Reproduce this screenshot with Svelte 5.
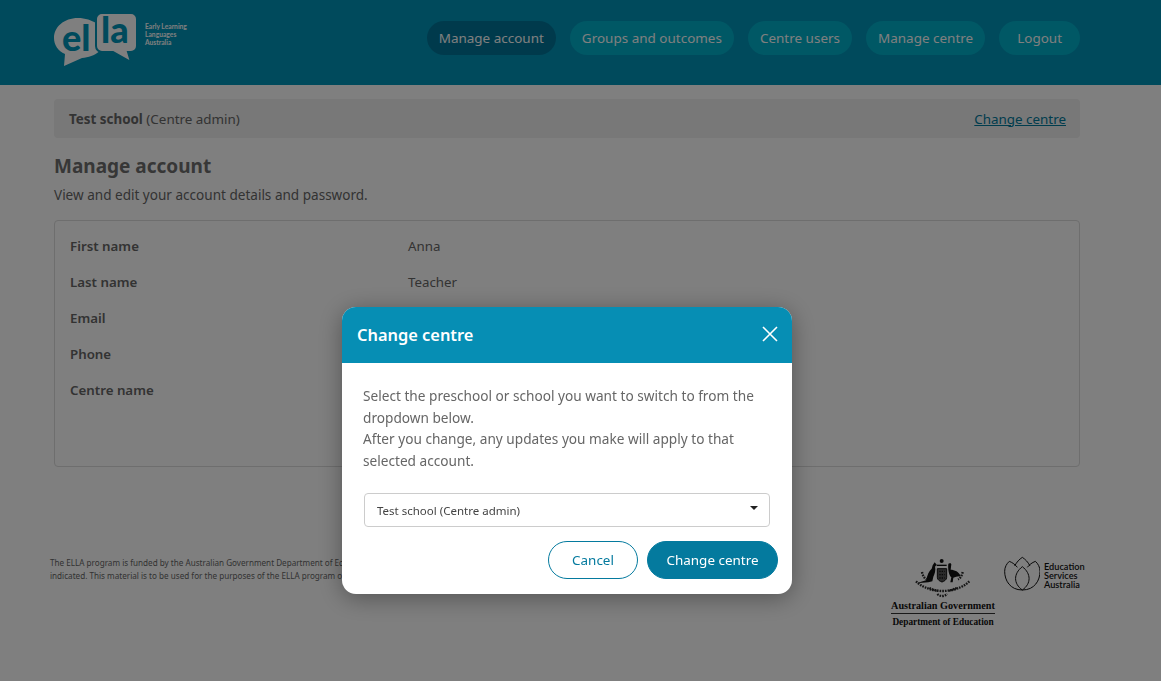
<script>
  const nav = [
    { label: 'Manage account', active: true },
    { label: 'Groups and outcomes' },
    { label: 'Centre users' },
    { label: 'Manage centre' },
    { label: 'Logout' }
  ];
  const rows = [
    ['First name', 'Anna'],
    ['Last name', 'Teacher'],
    ['Email', ''],
    ['Phone', ''],
    ['Centre name', '']
  ];
</script>

<div class="page">
  <header class="top">
    <div class="logo">
      <svg width="84" height="54" viewBox="0 0 84 54">
        <path class="bub" d="M24 5C10 5 0 14 0 25c0 7 4 13 11 16L10 53l18-8c13-1 24-9 24-20S38 5 24 5z" />
        <path class="bubr" d="M48 0h29a6 6 0 0 1 6 6v27a6 6 0 0 1-6 6h-3l3 10-18-10H48a6 6 0 0 1-6-6V6a6 6 0 0 1 6-6z" />
        <text class="lt" x="8" y="38">el</text>
        <text class="lt" x="47" y="30">la</text>
      </svg>
      <div class="tag">Early Learning<br />Languages<br />Australia</div>
    </div>
    <nav class="nav">
      {#each nav as item}
        <a class="pill" class:active={item.active} href="#top">{item.label}</a>
      {/each}
    </nav>
  </header>

  <main class="main">
    <div class="bar">
      <span><b>Test school</b> (Centre admin)</span>
      <a class="link" href="#top">Change centre</a>
    </div>
    <h1>Manage account</h1>
    <p class="sub">View and edit your account details and password.</p>
    <section class="card">
      {#each rows as [k, v]}
        <div class="row"><span class="k">{k}</span><span class="v">{v}</span></div>
      {/each}
    </section>
  </main>

  <footer class="foot">
    <p class="legal">The ELLA program is funded by the Australian Government Department of Education<br />indicated. This material is to be used for the purposes of the ELLA program only.</p>
    <div class="gov">
      <svg class="arms" width="66" height="48" viewBox="0 0 198 144">
        <circle cx="95" cy="27" r="6" fill="#111" />
        <path d="M80 40h30" stroke="#111" stroke-width="4" />
        <path d="M82 50h28v26c0 8-8 12-14 14-6-2-14-6-14-14z" fill="#555" stroke="#111" stroke-width="3" />
        <path d="M88 58h16M88 68h16M88 78h16" stroke="#111" stroke-width="4" stroke-dasharray="4 3" />
        <path d="M74 31l6 7-5 6c3 10-1 22-5 30l-3 14-12 3-36 3 29-9c4-16 9-29 17-35l3-10z" fill="#111" />
        <path d="M115 35l6-2 3 4-2 16c11 0 26 6 30 20-10-1-15 2-22 4l-2 14h-7l3-15c-7-7-11-23-9-41z" fill="#111" />
        <path d="M18 88c14 14 36 24 62 28M178 88c-14 14-36 24-62 28M36 60c2 10 6 18 14 22M158 60c-2 10-6 18-14 22M58 108c24 12 56 12 82 0M82 126c8 8 20 8 30 0" fill="none" stroke="#2a2a2a" stroke-width="7" stroke-dasharray="5 3" />
      </svg>
      <div class="govname">Australian Government</div>
      <div class="dept">Department of Education</div>
    </div>
    <div class="esa">
      <svg width="36" height="36" viewBox="12 12 108 108" fill="none" stroke="#111" stroke-width="3">
        <path d="M67 114C30 114 14 85 14 58c0-13 6-23 14-30 10 4 18 10 24 18" />
        <path d="M67 114c37 0 53-29 53-56 0-13-6-23-14-30-10 4-18 10-24 18" />
        <path d="M44 42c6-12 14-20 23-26 9 6 17 14 23 26" />
        <path d="M67 114C40 95 40 65 67 44c27 21 27 51 0 70z" />
      </svg>
      <div class="esatext">Education<br />Services<br />Australia</div>
    </div>
  </footer>
</div>

<div class="overlay">
  <div class="modal" role="dialog" aria-label="Change centre">
    <div class="mhead">
      <h2>Change centre</h2>
      <svg class="close" width="16" height="16" viewBox="0 0 16 16"><path d="M1 1l14 14M15 1L1 15" stroke="#fff" stroke-width="1.6" fill="none" /></svg>
    </div>
    <div class="mbody">
      <p>Select the preschool or school you want to switch to from the dropdown below.<br />After you change, any updates you make will apply to that selected account.</p>
      <div class="select"><span>Test school (Centre admin)</span><i class="caret"></i></div>
    </div>
    <div class="mfoot">
      <button class="btn ghost">Cancel</button>
      <button class="btn solid">Change centre</button>
    </div>
  </div>
</div>

<style>
  :global(body) {
    margin: 0;
    background: #fff;
    font-family: "Noto Sans", "Open Sans", sans-serif;
    color: #666;
    overflow: hidden;
  }
  .page { height: 681px; }
  .top {
    height: 85px;
    box-sizing: border-box;
    background: #0094b8;
    display: flex;
    justify-content: space-between;
    padding: 0 81px 0 54px;
  }
  .logo { display: flex; align-items: flex-start; padding-top: 13px; }
  .logo svg { overflow: visible; }
  .bub { fill: #fff; }
  .bubr { fill: #fff; stroke: #0094b8; stroke-width: 2; }
  .lt { font: 900 36px "Lato", sans-serif; fill: #0094b8; }
  .tag { font: 700 6.7px/8px "Lato", sans-serif; color: #fff; padding: 9px 0 0 7px; white-space: nowrap; }
  .nav { display: flex; gap: 14px; padding-top: 21px; }
  .pill {
    height: 34px;
    box-sizing: border-box;
    padding: 0 12px;
    line-height: 34px;
    border-radius: 17px;
    background: #00b0ca;
    color: #fff;
    font-size: 13.47px;
    text-decoration: none;
    white-space: nowrap;
  }
  .pill:last-child { padding: 0 18px; }
  .pill.active { background: #007599; }
  .main { padding: 14px 81px 0 54px; }
  .bar {
    height: 39px;
    box-sizing: border-box;
    padding: 0 14px 0 15px;
    background: #f0f0f0;
    border-radius: 4px;
    display: flex;
    align-items: center;
    justify-content: space-between;
    font-size: 13.4px;
  }
  .link { color: #007a9c; text-decoration: underline; }
  h1 { margin: 16px 0 0; font-size: 19px; line-height: 24px; font-weight: 700; color: #6e6e6e; }
  .sub { margin: 7px 0 0; font-size: 13.55px; line-height: 20px; }
  .card {
    margin-top: 15px;
    height: 247px;
    box-sizing: border-box;
    border: 1px solid #dcdcdc;
    border-radius: 4px;
    padding: 7px 15px;
  }
  .row { display: flex; height: 36px; align-items: center; font-size: 13.3px; }
  .k { width: 338px; font-weight: 600; }
  .foot { display: flex; padding-top: 88.5px; padding-left: 50px; }
  .legal { margin: 0; width: 841px; font-size: 8.15px; line-height: 13px; color: #666; white-space: nowrap; }
  .gov { width: 104px; display: flex; flex-direction: column; text-align: center; margin-top: -3.5px; font-family: "Liberation Serif", serif; font-weight: 700; color: #111; }
  .arms { align-self: center; }
  .govname { font-size: 10.2px; line-height: 12px; border-bottom: 1px solid #333; height: 13px; white-space: nowrap; }
  .dept { font-size: 9.3px; line-height: 17px; white-space: nowrap; }
  .esa { display: flex; gap: 4px; margin: 0 0 0 9px; }
  .esatext { font: 600 9.2px/9px "Lato", sans-serif; color: #111; padding-top: 6px; white-space: nowrap; }
  .overlay {
    position: fixed;
    inset: 0;
    background: rgba(0, 0, 0, 0.5);
  }
  .modal {
    position: absolute;
    left: 342px;
    top: 307px;
    width: 450px;
    height: 287px;
    background: #fff;
    border-radius: 14px;
    overflow: hidden;
    box-shadow: 0 4px 24px rgba(0, 0, 0, 0.35);
    display: flex;
    flex-direction: column;
  }
  .mhead {
    height: 56px;
    flex: none;
    background: #068eb4;
    display: flex;
    align-items: center;
    justify-content: space-between;
    padding: 0 14px 0 15px;
    color: #fff;
  }
  h2 { margin: 0 0 1px; font-size: 16.4px; font-weight: 600; }
  .close { margin-top: -2px; }
  .mbody { padding: 22px 22px 0 21px; }
  .mbody p { margin: 0; font-size: 13.65px; line-height: 21.6px; color: #666; }
  .select {
    margin: 22px 0 0 1px;
    height: 34px;
    box-sizing: border-box;
    border: 1px solid #ccc;
    border-radius: 4px;
    padding: 0 12px;
    display: flex;
    align-items: center;
    justify-content: space-between;
    font-size: 11.5px;
    color: #444;
  }
  .caret { width: 0; height: 0; border: 4px solid transparent; border-top-color: #222; border-bottom: 0; margin-top: -4px; margin-right: -1px; }
  .mfoot { display: flex; justify-content: flex-end; gap: 9px; padding: 14px 14px 0 0; }
  .btn { height: 38px; border-radius: 19px; font: 13.45px "Noto Sans", "Open Sans", sans-serif; padding: 0; }
  .ghost { width: 90px; background: #fff; border: 1px solid #047a9e; color: #047a9e; }
  .solid { width: 131px; background: #047a9e; border: 1px solid #047a9e; color: #fff; }
</style>
